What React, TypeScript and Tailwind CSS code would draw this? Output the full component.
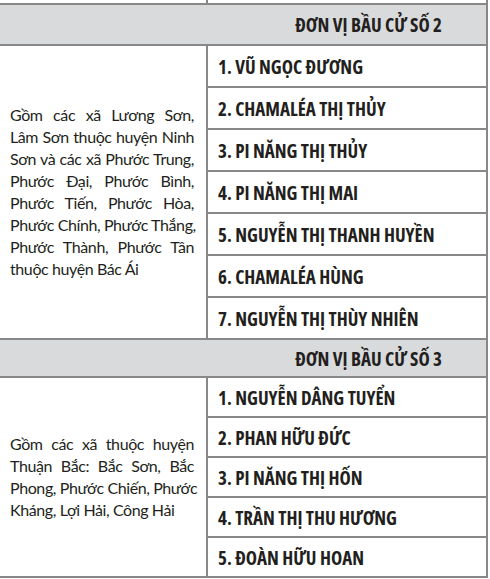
import React from "react";

const sections = [
  {
    title: "ĐƠN VỊ BẦU CỬ SỐ 2",
    area: [
      "Gồm các xã Lương Sơn,",
      "Lâm Sơn thuộc huyện Ninh",
      "Sơn và các xã Phước Trung,",
      "Phước Đại, Phước Bình,",
      "Phước Tiến, Phước Hòa,",
      "Phước Chính, Phước Thắng,",
      "Phước Thành, Phước Tân",
      "thuộc huyện Bác Ái",
    ],
    headerH: "h-[41px]",
    rowH: "h-[42px]",
    names: [
      "1. VŨ NGỌC ĐƯƠNG",
      "2. CHAMALÉA THỊ THỦY",
      "3. PI NĂNG THỊ THỦY",
      "4. PI NĂNG THỊ MAI",
      "5. NGUYỄN THỊ THANH HUYỀN",
      "6. CHAMALÉA HÙNG",
      "7. NGUYỄN THỊ THÙY NHIÊN",
    ],
  },
  {
    title: "ĐƠN VỊ BẦU CỬ SỐ 3",
    area: [
      "Gồm các xã thuộc huyện",
      "Thuận Bắc: Bắc Sơn, Bắc",
      "Phong, Phước Chiến, Phước",
      "Kháng, Lợi Hải, Công Hải",
    ],
    headerH: "h-[38px]",
    rowH: "h-[40px]",
    names: [
      "1. NGUYỄN DÂNG TUYỂN",
      "2. PHAN HỮU ĐỨC",
      "3. PI NĂNG THỊ HỐN",
      "4. TRẦN THỊ THU HƯƠNG",
      "5. ĐOÀN HỮU HOAN",
    ],
  },
];

const bold = "font-['Open_Sans',sans-serif] font-stretch-condensed font-bold";

export default function App() {
  return (
    <div className="w-[490px] h-[579px] bg-white overflow-hidden text-[#231f20]">
      <div className="w-[488px] border-r-2 border-[#888]">
        {/* tail of previous row */}
        <div className="h-[3px] flex">
          <div className="w-[208px] border-r-2 border-[#888]" />
        </div>

        {sections.map((s) => (
          <div key={s.title}>
            <div
              className={`${s.headerH} bg-[#d9dadc] border-t-2 border-[#888] flex items-center justify-end pr-[44px] pt-[2px] text-[19px] ${bold}`}
            >
              {s.title}
            </div>
            <div className="flex">
              <div className="w-[208px] shrink-0 border-t-2 border-r-2 border-[#888] flex flex-col justify-center pl-[10px] pr-[12px] font-['Lato',sans-serif] text-[16px] leading-[22px] tracking-[-0.4px]">
                {s.area.map((line, i) => (
                  <div
                    key={line}
                    className={`whitespace-nowrap ${i < s.area.length - 1 ? "text-justify [text-align-last:justify]" : ""}`}
                  >
                    {line}
                  </div>
                ))}
              </div>
              <div className="flex-1">
                {s.names.map((n) => (
                  <div
                    key={n}
                    className={`${s.rowH} border-t-2 border-[#888] flex items-center pl-[10px] pt-[3px] text-[19px] ${bold}`}
                  >
                    {n}
                  </div>
                ))}
              </div>
            </div>
          </div>
        ))}
        <div className="border-t-2 border-[#888]" />
      </div>
    </div>
  );
}
